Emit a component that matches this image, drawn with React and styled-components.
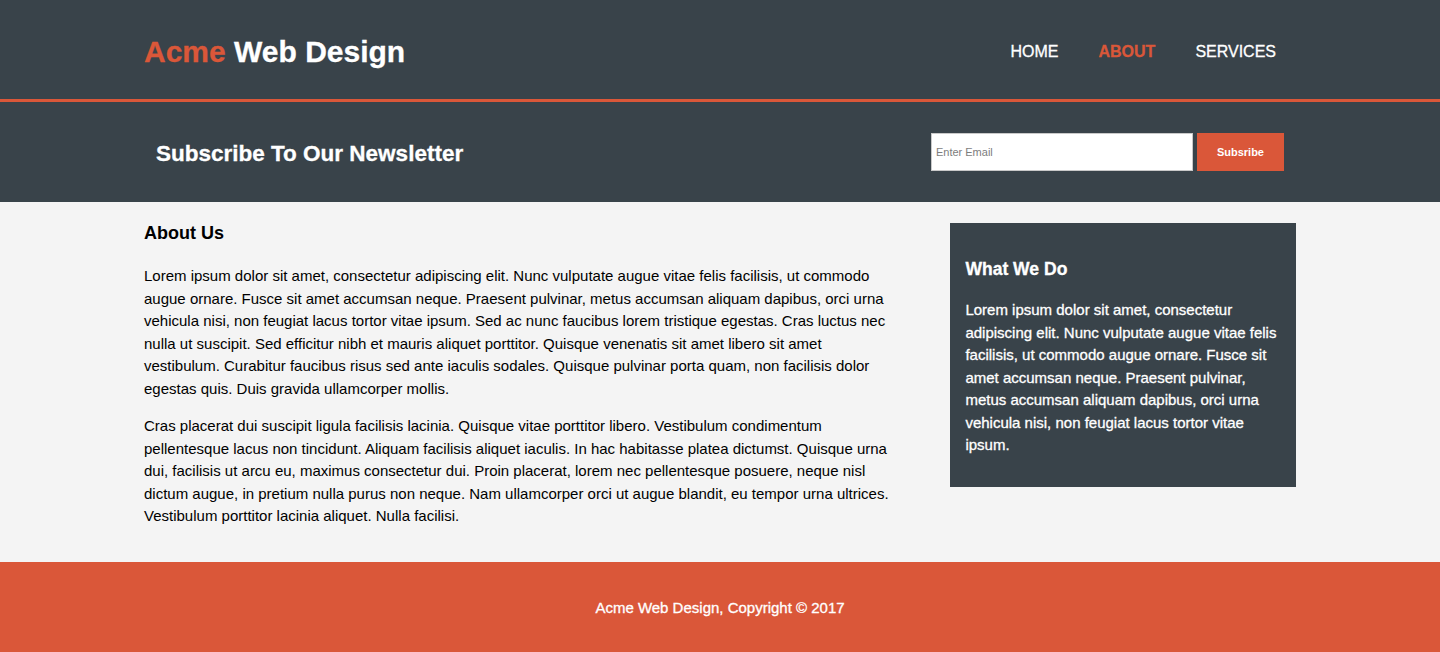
import React from "react";
import styled, { createGlobalStyle } from "styled-components";

const DARK = "#39434a";
const ORANGE = "#da5739";

const GlobalStyle = createGlobalStyle`
  html, body { margin: 0; padding: 0; }
  body {
    font-family: "Liberation Sans", Arial, Helvetica, sans-serif;
    font-size: 15px;
    line-height: 1.5;
    background: #f4f4f4;
    color: #000;
  }
  * { box-sizing: content-box; }
`;

const Container = styled.div`
  width: 80%;
  margin: 0 auto;
  display: flex;
  justify-content: ${(p) => p.$justify || "space-between"};
  align-items: ${(p) => p.$align || "flex-start"};
`;

const Header = styled.header`
  background: ${DARK};
  color: #fff;
  padding-top: 30px;
  min-height: 69px;
  border-bottom: 3px solid ${ORANGE};
  -webkit-text-stroke-width: 0.3px;
`;

const Brand = styled.h1`
  margin: 0;
  font-size: 30px;
  font-weight: bold;
  line-height: 43px;
`;

const Highlight = styled.span`
  color: ${ORANGE};
`;

const NavList = styled.ul`
  list-style: none;
  margin: 10px 0 0;
  padding: 0;
  display: flex;
`;

const NavItem = styled.li`
  padding: 0 20px;
`;

const NavLink = styled.a`
  color: ${(p) => (p.$current ? ORANGE : "#fff")};
  font-weight: ${(p) => (p.$current ? "bold" : "normal")};
  text-decoration: none;
  text-transform: uppercase;
  font-size: 16px;
`;

const Newsletter = styled.section`
  background: ${DARK};
  color: #fff;
  padding: 15px;
  min-height: 70px;
  display: flex;
  align-items: center;
`;

const NewsTitle = styled.h1`
  margin: 4px 0 0;
  font-size: 22.5px;
  font-weight: bold;
  line-height: 34px;
  -webkit-text-stroke-width: 0.3px;
`;

const Form = styled.form`
  display: flex;
  align-items: center;
  gap: 4px;
`;

const EmailInput = styled.input`
  width: 252px;
  height: 28px;
  padding: 4px;
  border: 1px solid #c9c9c9;
  font-family: "Liberation Sans", Arial, sans-serif;
  font-size: 11px;
  color: #333;
  outline: none;
  margin-top: -1px;
  &::placeholder { color: #7d7d7d; }
`;

const SubmitButton = styled.button`
  height: 38px;
  padding: 0 20px;
  border: 0;
  background: ${ORANGE};
  color: #fff;
  font-family: "Liberation Sans", Arial, sans-serif;
  font-size: 11px;
  font-weight: bold;
  cursor: pointer;
`;

const MainCol = styled.article`
  width: 65%;
`;

const Sidebar = styled.aside`
  width: 30%;
  margin-top: 11px;
`;

const PageTitle = styled.h1`
  font-size: 18px;
  font-weight: bold;
  line-height: 27px;
  margin: 18px 0;
`;

const Paragraph = styled.p`
  margin: 15px 0;
`;

const DarkBox = styled.div`
  background: ${DARK};
  color: #fff;
  padding: 15px;
  margin: 10px 0;
  -webkit-text-stroke-width: 0.3px;
`;

const BoxTitle = styled.h3`
  font-size: 17.55px;
  font-weight: bold;
  margin: 17.55px 0;
`;

const Footer = styled.footer`
  background: ${ORANGE};
  color: #fff;
  padding: 20px;
  margin-top: 19px;
  text-align: center;
  -webkit-text-stroke-width: 0.3px;
`;

const FooterText = styled.p`
  margin: 15px 0;
`;

export default function App() {
  return (
    <>
      <GlobalStyle />
      <Header>
        <Container>
          <Brand>
            <Highlight>Acme</Highlight> Web Design
          </Brand>
          <nav>
            <NavList>
              <NavItem><NavLink href="#">Home</NavLink></NavItem>
              <NavItem><NavLink href="#" $current>About</NavLink></NavItem>
              <NavItem><NavLink href="#">Services</NavLink></NavItem>
            </NavList>
          </nav>
        </Container>
      </Header>

      <Newsletter>
        <Container $align="center">
          <NewsTitle>Subscribe To Our Newsletter</NewsTitle>
          <Form onSubmit={(e) => e.preventDefault()}>
            <EmailInput type="email" placeholder="Enter Email" />
            <SubmitButton type="submit">Subsribe</SubmitButton>
          </Form>
        </Container>
      </Newsletter>

      <main>
        <Container>
          <MainCol>
            <PageTitle>About Us</PageTitle>
            <Paragraph>
              Lorem ipsum dolor sit amet, consectetur adipiscing elit. Nunc vulputate augue vitae felis facilisis, ut commodo augue ornare. Fusce sit amet accumsan neque. Praesent pulvinar, metus accumsan aliquam dapibus, orci urna vehicula nisi, non feugiat lacus tortor vitae ipsum. Sed ac nunc faucibus lorem tristique egestas. Cras luctus nec nulla ut suscipit. Sed efficitur nibh et mauris aliquet porttitor. Quisque venenatis sit amet libero sit amet vestibulum. Curabitur faucibus risus sed ante iaculis sodales. Quisque pulvinar porta quam, non facilisis dolor egestas quis. Duis gravida ullamcorper mollis.
            </Paragraph>
            <Paragraph>
              Cras placerat dui suscipit ligula facilisis lacinia. Quisque vitae porttitor libero. Vestibulum condimentum pellentesque lacus non tincidunt. Aliquam facilisis aliquet iaculis. In hac habitasse platea dictumst. Quisque urna dui, facilisis ut arcu eu, maximus consectetur dui. Proin placerat, lorem nec pellentesque posuere, neque nisl dictum augue, in pretium nulla purus non neque. Nam ullamcorper orci ut augue blandit, eu tempor urna ultrices. Vestibulum porttitor lacinia aliquet. Nulla facilisi.
            </Paragraph>
          </MainCol>
          <Sidebar>
            <DarkBox>
              <BoxTitle>What We Do</BoxTitle>
              <Paragraph>
                Lorem ipsum dolor sit amet, consectetur adipiscing elit. Nunc vulputate augue vitae felis facilisis, ut commodo augue ornare. Fusce sit amet accumsan neque. Praesent pulvinar, metus accumsan aliquam dapibus, orci urna vehicula nisi, non feugiat lacus tortor vitae ipsum.
              </Paragraph>
            </DarkBox>
          </Sidebar>
        </Container>
      </main>

      <Footer>
        <FooterText>Acme Web Design, Copyright &copy; 2017</FooterText>
      </Footer>
    </>
  );
}
